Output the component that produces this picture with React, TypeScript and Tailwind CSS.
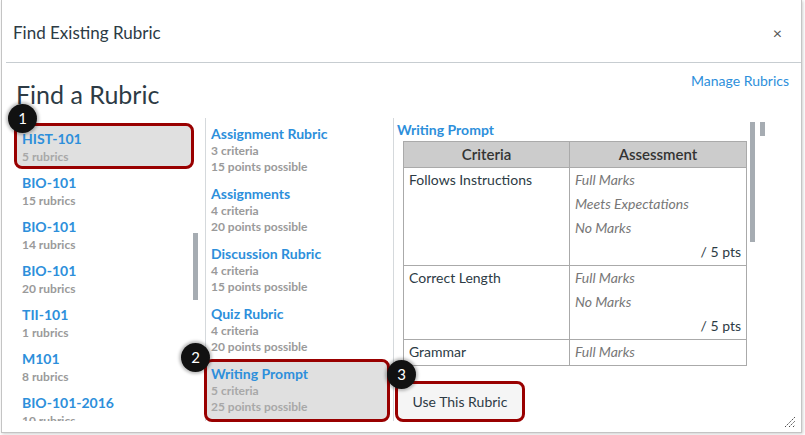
import React from "react";

const courses = [
  { name: "HIST-101", count: "5 rubrics", selected: true },
  { name: "BIO-101", count: "15 rubrics" },
  { name: "BIO-101", count: "14 rubrics" },
  { name: "BIO-101", count: "20 rubrics" },
  { name: "TII-101", count: "1 rubrics" },
  { name: "M101", count: "8 rubrics" },
  { name: "BIO-101-2016", count: "10 rubrics" },
];

const rubrics = [
  { name: "Assignment Rubric", criteria: "3 criteria", points: "15 points possible" },
  { name: "Assignments", criteria: "4 criteria", points: "20 points possible" },
  { name: "Discussion Rubric", criteria: "4 criteria", points: "15 points possible" },
  { name: "Quiz Rubric", criteria: "4 criteria", points: "20 points possible" },
  { name: "Writing Prompt", criteria: "5 criteria", points: "25 points possible", selected: true },
];

const rows = [
  { criterion: "Follows Instructions", ratings: ["Full Marks", "Meets Expectations", "No Marks"], pts: "/ 5 pts" },
  { criterion: "Correct Length", ratings: ["Full Marks", "No Marks"], pts: "/ 5 pts" },
  { criterion: "Grammar", ratings: ["Full Marks"], pts: "" },
];

function Badge({ n, className }: { n: number; className: string }) {
  return (
    <div
      className={`absolute z-10 flex h-[29px] w-[29px] items-center justify-center rounded-full bg-[#111] text-[15px] text-white shadow-[0_0_3px_2px_rgba(0,0,0,0.25)] ${className}`}
    >
      {n}
    </div>
  );
}

export default function App() {
  return (
    <div
      className="relative h-[435px] w-[805px] overflow-hidden bg-white text-[#2d3b45]"
      style={{ fontFamily: "Lato, 'Noto Sans', sans-serif" }}
    >
      <div className="relative ml-[1px] flex h-[433px] w-[801px] flex-col border-x border-b border-[#c4c4c4] bg-white shadow-[1px_1px_3px_rgba(0,0,0,0.2)]">
        {/* header */}
        <div className="flex h-[62px] items-center justify-between pl-[11px] pr-[19px] pt-[4px]">
          <span className="text-[17px]">Find Existing Rubric</span>
          <span className="text-[16px] text-[#555]">×</span>
        </div>
        <div className="ml-[4px] h-px bg-[#c7cdd1]" />

        {/* top row */}
        <div className="relative h-[55px]">
          <a className="absolute right-[12px] top-[7px] text-[14px] text-[#2d8fdb]">Manage Rubrics</a>
          <h1 className="pl-[14px] pt-[16px] text-[25px] leading-[30px]">Find a Rubric</h1>
        </div>

        {/* columns */}
        <div className="flex h-[303px] pl-[4px]">
          {/* courses */}
          <div className="relative w-[199px] overflow-hidden pl-[11px] pt-[8px]">
            {courses.map((c, i) => (
              <div
                key={i}
                className={`mb-[4px] h-[40px] w-[174px] pl-[5px] pt-[4px] ${
                  c.selected ? "rounded-[5px] bg-[#e0e0e0] outline-[3px] outline-[#990000] outline-solid" : ""
                }`}
              >
                <div className="text-[14px] font-bold leading-[18px] text-[#2d8fdb]">{c.name}</div>
                <div className={`text-[12px] font-bold leading-[18px] ${c.selected ? "text-[#a8a8a8]" : "text-[#9a9a9a]"}`}>
                  {c.count}
                </div>
              </div>
            ))}
            <div className="absolute left-[187px] top-[115px] h-[67px] w-[5px] bg-[#a6acb2]" />
          </div>

          {/* rubrics */}
          <div className="w-[188px] border-l border-[#d5d9dc] pl-[1px] pt-[4px]">
            {rubrics.map((r, i) => (
              <div
                key={i}
                className={`mb-[3px] h-[57px] w-[180px] pl-[4px] pt-[2px] ${
                  r.selected ? "rounded-[5px] bg-[#e0e0e0] outline-[3px] outline-[#990000] outline-solid" : ""
                }`}
              >
                <div className="text-[14px] font-bold leading-[19px] text-[#2d8fdb]">{r.name}</div>
                <div className={`text-[12px] font-bold leading-[16px] ${r.selected ? "text-[#a8a8a8]" : "text-[#9a9a9a]"}`}>
                  {r.criteria}
                </div>
                <div className={`text-[12px] font-bold leading-[16px] ${r.selected ? "text-[#a8a8a8]" : "text-[#9a9a9a]"}`}>
                  {r.points}
                </div>
              </div>
            ))}
          </div>

          {/* preview */}
          <div className="w-[376px] border-l border-[#d5d9dc] pt-[4px]">
            <div className="relative h-[250px] w-[364px] overflow-hidden">
              <div className="pl-[3px] text-[14px] font-bold leading-[16px] text-[#2d8fdb]">Writing Prompt</div>
              <table className="ml-[9px] mt-[3px] w-[344px] border-collapse text-[14px]">
                <thead>
                  <tr className="h-[26px] bg-[#cccccc]">
                    <th className="w-[166px] border border-[#aaa] text-[15px] font-semibold text-[#333]">Criteria</th>
                    <th className="border border-[#aaa] text-[15px] font-semibold text-[#333]">Assessment</th>
                  </tr>
                </thead>
                <tbody>
                  {rows.map((row, i) => (
                    <tr key={i}>
                      <td className="border border-[#aaa] px-[5px] pb-[1px] align-top leading-[24px] text-[#2d3b45]">{row.criterion}</td>
                      <td className="border border-[#aaa] px-[5px] pb-[1px] align-top leading-[24px]">
                        {row.ratings.map((r) => (
                          <div key={r} className="text-[14px] italic text-[#777]">
                            {r}
                          </div>
                        ))}
                        {row.pts && <div className="text-right text-[#2d3b45]">{row.pts}</div>}
                      </td>
                    </tr>
                  ))}
                </tbody>
              </table>
              <div className="absolute left-[356px] top-0 h-[120px] w-[5px] bg-[#a6acb2]" />
            </div>
            <button className="ml-[4px] mt-[12px] h-[35px] w-[124px] rounded-[5px] bg-[#f5f5f5] text-[14px] text-[#2d3b45] outline-[3px] outline-[#990000] outline-solid">
              Use This Rubric
            </button>
          </div>
        </div>

        <div className="absolute right-[36px] top-[122px] h-[14px] w-[5px] bg-[#a6acb2]" />

        <svg className="absolute bottom-[4px] right-[5px]" width="12" height="12" viewBox="0 0 12 12">
          <path d="M1 11 L11 1 M5 11 L11 5 M9 11 L11 9" stroke="#444" strokeWidth="1" strokeDasharray="1.5 1" />
        </svg>
      </div>

      <Badge n={1} className="left-[8px] top-[104px]" />
      <Badge n={2} className="left-[181px] top-[343px]" />
      <Badge n={3} className="left-[387px] top-[360px]" />
    </div>
  );
}
